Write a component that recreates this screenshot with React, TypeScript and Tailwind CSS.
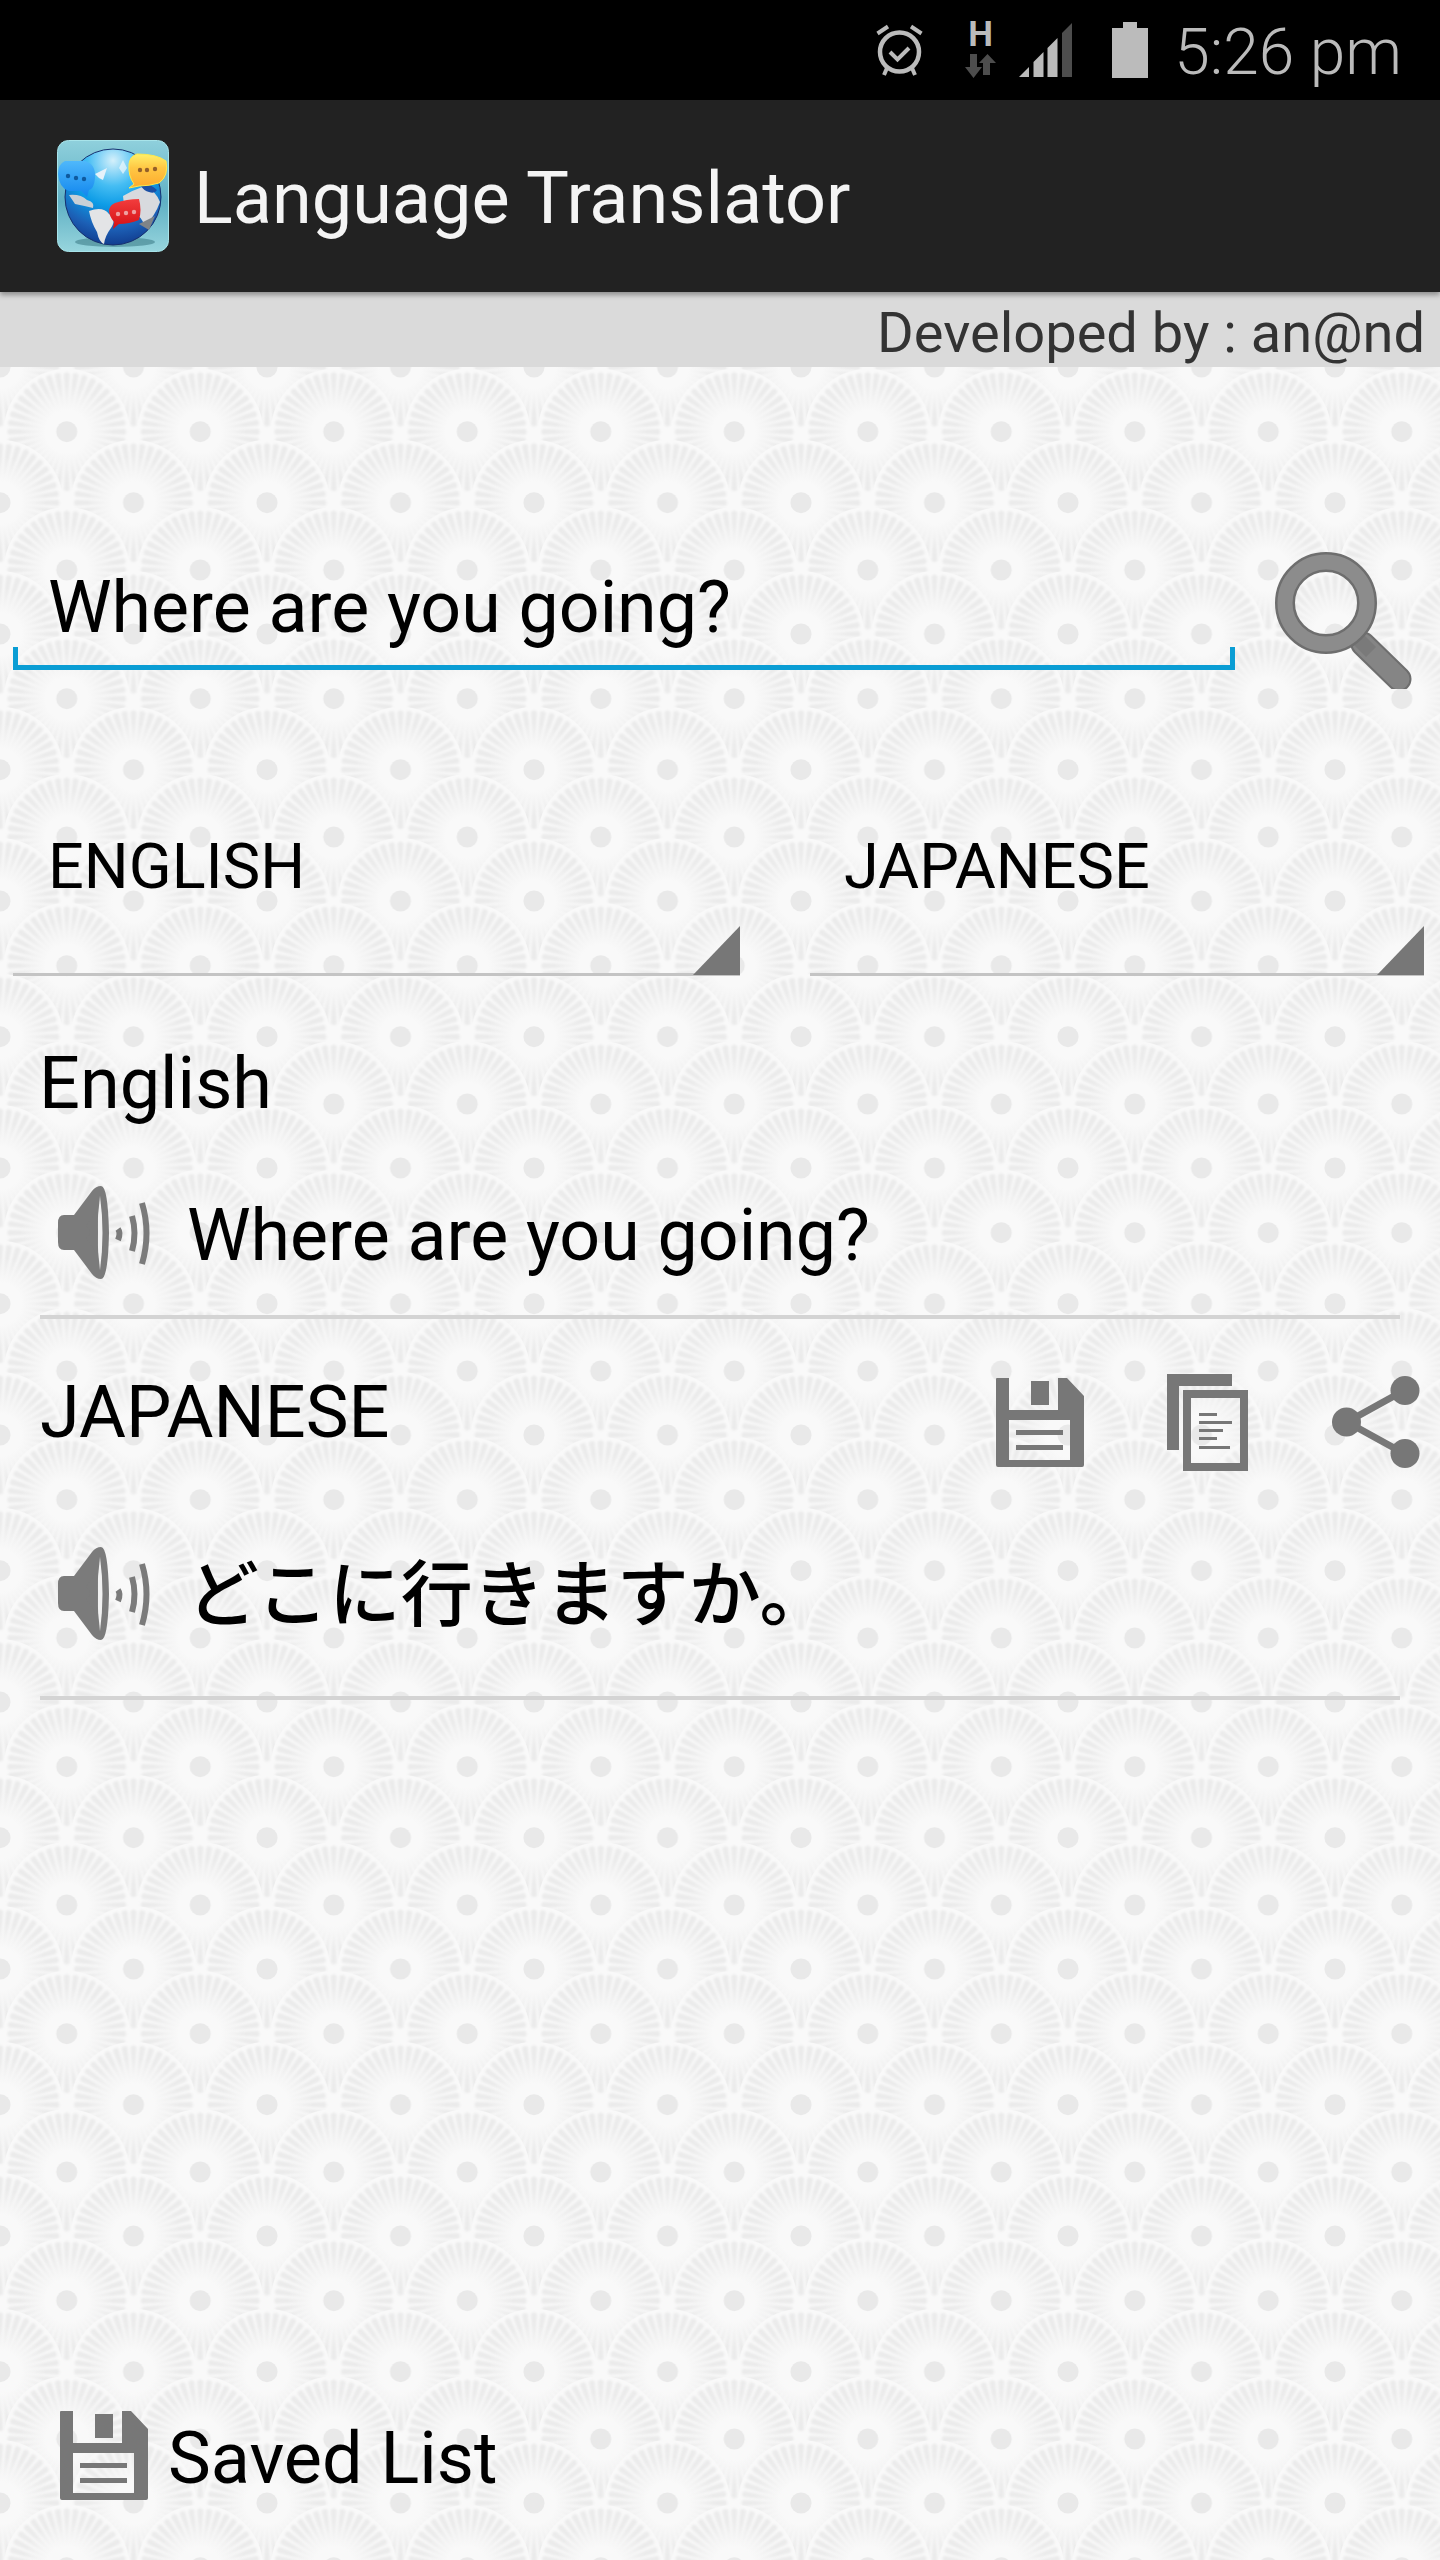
const spokes = Array.from({ length: 40 }, (_, i) => (i * 360) / 40);

function Scale({ id }: { id: string }) {
  return (
    <g id={id}>
      <circle r="63" fill="#f9f9f9" />
      <g filter="url(#soft)">
        {spokes.map((a) => (
          <path key={a} d="M-1.2 -22 L1.2 -22 L3 -58 Q0 -61 -3 -58 Z" fill="#ebebeb" transform={`rotate(${a})`} />
        ))}
      </g>
      <circle r="46" fill="url(#halo)" />
      <circle r="10.5" fill="#e9e9e9" />
    </g>
  );
}

function Pattern() {
  // rows from back to front, the lower scale covers the upper one
  const rows: [number, number][] = [
    [-64, 66.75],
    [0, 0],
    [64.7, 66.75],
    [135.7, 0],
    [203, 66.75],
    [267, 0],
    [331.7, 66.75],
  ];
  return (
    <svg className="absolute inset-0 h-full w-full" aria-hidden="true">
      <defs>
        <filter id="soft" x="-10%" y="-10%" width="120%" height="120%">
          <feGaussianBlur stdDeviation="1" />
        </filter>
        <radialGradient id="halo">
          <stop offset="0.45" stopColor="#f9f9f9" />
          <stop offset="1" stopColor="#f9f9f9" stopOpacity="0" />
        </radialGradient>
        <Scale id="scale" />
        <pattern id="tile" width="133.5" height="267" patternUnits="userSpaceOnUse">
          <rect width="133.5" height="267" fill="#f9f9f9" />
          {rows.map(([y, x]) =>
            [-133.5, 0, 133.5].map((dx) => <use key={`${y}-${dx}`} href="#scale" x={x + dx} y={y} />),
          )}
        </pattern>
      </defs>
      <rect width="100%" height="100%" fill="url(#tile)" />
    </svg>
  );
}

function AlarmIcon() {
  return (
    <svg width="47" height="52" viewBox="0 0 47 52" fill="none" stroke="#bbb">
      <circle cx="23.5" cy="28" r="19.5" strokeWidth="4.5" />
      <path d="M14 28l7.5 7.5L33 24" strokeWidth="4" />
      <path d="M1.5 9.5L12 2.5M45.5 9.5L35 2.5" strokeWidth="4" />
      <path d="M11 44l-3 7M36 44l3 7" strokeWidth="4" />
    </svg>
  );
}

function ArrowsIcon() {
  return (
    <svg width="31" height="24" viewBox="0 0 31 24" fill="#4d4d4d">
      <path d="M5 0h7v13h5L8.5 24 0 13h5z" />
      <path d="M18 21V9h-4l8.5-9L31 9h-6v12z" />
    </svg>
  );
}

function SignalIcon() {
  return (
    <svg width="53" height="54" viewBox="0 0 53 54">
      <path d="M0 54L10 44V54Z" fill="#bbb" />
      <path d="M14.5 54V39L24.5 29V54Z" fill="#bbb" />
      <path d="M28.5 54V25L38.5 15V54Z" fill="#bbb" />
      <path d="M43 54V10L53 0V54Z" fill="#4d4d4d" />
    </svg>
  );
}

function BatteryIcon() {
  return (
    <svg width="36" height="56" viewBox="0 0 36 56" fill="#bbb">
      <path d="M11 0h14v6h11v50H0V6h11z" />
    </svg>
  );
}

function AppIcon() {
  return (
    <svg width="112" height="112" viewBox="0 0 112 112">
      <defs>
        <linearGradient id="bg" x1="0" y1="0" x2="0" y2="1">
          <stop offset="0" stopColor="#8fd0dc" />
          <stop offset="0.55" stopColor="#5fb0c4" />
          <stop offset="1" stopColor="#97d5dd" />
        </linearGradient>
        <radialGradient id="globe" cx="0.5" cy="0.12" r="0.95">
          <stop offset="0" stopColor="#d4f0fb" />
          <stop offset="0.28" stopColor="#45bdf3" />
          <stop offset="0.5" stopColor="#0c9be6" />
          <stop offset="0.75" stopColor="#1c5fb5" />
          <stop offset="1" stopColor="#0d2f80" />
        </radialGradient>
        <linearGradient id="blue" x1="0" y1="0" x2="0" y2="1">
          <stop offset="0" stopColor="#4fb8fb" />
          <stop offset="1" stopColor="#1287ee" />
        </linearGradient>
        <linearGradient id="yellow" x1="0" y1="0" x2="0" y2="1">
          <stop offset="0" stopColor="#fff06a" />
          <stop offset="0.4" stopColor="#ffc845" />
          <stop offset="1" stopColor="#fda92c" />
        </linearGradient>
        <linearGradient id="red" x1="0" y1="0" x2="0" y2="1">
          <stop offset="0" stopColor="#f23d3d" />
          <stop offset="1" stopColor="#d40f14" />
        </linearGradient>
      </defs>
      <rect x="0.5" y="0.5" width="111" height="111" rx="11" fill="url(#bg)" stroke="#a8e4ea" />
      <ellipse cx="58" cy="102" rx="40" ry="5" fill="#3f7f8a" opacity="0.6" />
      <circle cx="56" cy="57" r="48" fill="url(#globe)" stroke="#17306e" strokeWidth="1" />
      <path d="M12 55 Q24 54 30 60 Q38 62 36 68 Q28 66 18 64Z" fill="#c9d0d6" />
      <path d="M32 71 Q46 66 52 74 Q60 79 54 88 Q48 96 47 104 Q42 102 40 92 Q34 82 32 71Z" fill="#e3e4e6" />
      <path d="M66 56 Q76 50 88 46 Q98 50 103 62 Q98 76 88 86 Q84 76 76 72 Q66 68 66 56Z" fill="#d8dade" />
      <path d="M84 46 Q92 42 100 50 Q98 54 92 52 Q87 51 84 46Z" fill="#1a4fa5" />
      <path d="M82 84 L98 76 L92 90 Z" fill="#7f8488" />
      <path d="M38 34 L50 28 L46 40 L42 38Z" fill="#e6f2fa" />
      <path d="M66 20 L70 28 L66 34 L62 28Z" fill="#eef8fc" opacity="0.7" />
      <path d="M8 21 H28 Q39 24 38 38 Q37 49 32 50 L30 57 L24 51 H12 Q2 48 1 34 Q1 24 8 21Z" fill="url(#blue)" />
      <circle cx="11" cy="36" r="2.2" fill="#0f5a9e" />
      <circle cx="19" cy="38" r="2.2" fill="#0f5a9e" />
      <circle cx="27" cy="39" r="2.2" fill="#0f5a9e" />
      <path d="M80 14 Q100 14 109 21 Q112 36 102 43 Q92 46 82 46 L72 48 L77 44 Q71 36 72 24 Q73 16 80 14Z" fill="url(#yellow)" stroke="#ffe94a" strokeWidth="1" />
      <circle cx="83" cy="30" r="2.2" fill="#94602a" />
      <circle cx="90" cy="30" r="2.2" fill="#94602a" />
      <circle cx="98" cy="29" r="2.2" fill="#94602a" />
      <path d="M58 63 Q70 59 82 59 Q85 70 82 80 Q72 84 62 84 L56 89 L57 82 Q52 76 52 70 Q53 65 58 63Z" fill="url(#red)" />
      <circle cx="61" cy="74" r="2.2" fill="#eea0a0" />
      <circle cx="69" cy="73" r="2.2" fill="#eea0a0" />
      <circle cx="77" cy="72" r="2.2" fill="#eea0a0" />
    </svg>
  );
}

function SearchIcon() {
  return (
    <svg width="137" height="137" viewBox="0 0 137 137" fill="none">
      <path d="M88 92 L124 127" stroke="#6e6e6e" strokeWidth="25" strokeLinecap="round" />
      <path d="M88 92 L124 127" stroke="#858585" strokeWidth="21" strokeLinecap="round" />
      <path d="M80 84 L96 100" stroke="#7a7a7a" strokeWidth="14" />
      <circle cx="51" cy="51" r="41" stroke="#6e6e6e" strokeWidth="20" />
      <circle cx="51" cy="51" r="41" stroke="#8c8c8c" strokeWidth="15" />
    </svg>
  );
}

function SpeakerIcon() {
  return (
    <svg width="92" height="94" viewBox="0 0 92 94" fill="none">
      <path d="M6 29 H16 L34 5 Q38 0 43 0 Q50 0 51 47 Q50 93 43 93 Q38 93 34 88 L16 64 H6 Q0 64 0 56 V37 Q0 29 6 29Z" fill="#7b7b7b" />
      <path d="M42 10 Q47 47 42 84 Q37 47 42 10Z" fill="#f1f1f1" />
      <path d="M39 25 Q41 47 39 68 Q32 58 28 52 Q36 47 28 40 Q33 32 39 25Z" fill="#7b7b7b" />
      <path d="M60 43 Q63 47 60 54" stroke="#7b7b7b" strokeWidth="6" />
      <path d="M74 30 Q79 47 74 65" stroke="#7b7b7b" strokeWidth="6" />
      <path d="M84 17 Q93 47 84 78" stroke="#7b7b7b" strokeWidth="6" />
    </svg>
  );
}

function SaveIcon() {
  return (
    <svg width="88" height="89" viewBox="0 0 88 89">
      <path
        fillRule="evenodd"
        fill="#777"
        d="M1 0H13V32H62V0H71L88 18V87Q88 89 86 89H2Q0 89 0 87V1Q0 0 1 0ZM13 42V82H74V42ZM35 3H53V27H35Z"
      />
      <path d="M20 52H67V57H20ZM20 67H67V72H20Z" fill="#777" />
    </svg>
  );
}

function CopyIcon() {
  return (
    <svg width="81" height="97" viewBox="0 0 81 97" fill="#777">
      <path d="M0 0H65V12H12V76H0Z" />
      <path fillRule="evenodd" d="M16 16H81V97H16ZM24 24V89H73V24Z" />
      <path d="M32 39H50V42H32ZM32 47H65V50H32ZM32 55H56V58H32ZM32 63H50V66H32ZM32 72H63V75H32Z" />
    </svg>
  );
}

function ShareIcon() {
  return (
    <svg width="88" height="92" viewBox="0 0 88 92" fill="#777">
      <path d="M15 46L73 14M15 46L73 78" stroke="#777" strokeWidth="7" />
      <circle cx="73" cy="14.5" r="14.5" />
      <circle cx="14.5" cy="46" r="14.5" />
      <circle cx="73" cy="77.5" r="14.5" />
    </svg>
  );
}

function Spinner({ label, className }: { label: string; className: string }) {
  return (
    <div className={`relative flex h-[195px] items-start border-b-[3px] border-[#c4c4c4] ${className}`}>
      <span className="mt-[54px] text-[63px] leading-[63px]">{label}</span>
      <svg className="absolute bottom-[-2px] right-0" width="47" height="49" viewBox="0 0 47 49">
        <path d="M47 0V49H0Z" fill="#777" />
      </svg>
    </div>
  );
}

export default function App() {
  return (
    <div className="flex h-[2560px] w-[1440px] flex-col overflow-hidden bg-[#f9f9f9] font-['Roboto',sans-serif] text-black">
      <div className="flex h-[100px] items-center justify-end bg-black pr-[38px]">
        <AlarmIcon />
        <div className="ml-[42px] flex w-[31px] flex-col items-center">
          <span className="mb-[7px] h-[25px] text-[35px] font-bold leading-[25px] text-[#bbb]">H</span>
          <ArrowsIcon />
        </div>
        <div className="ml-[23px]">
          <SignalIcon />
        </div>
        <div className="ml-[40px]">
          <BatteryIcon />
        </div>
        <span className="ml-[26px] mt-[6px] text-[64px] font-light leading-none text-[#bbb]">5:26 pm</span>
      </div>

      <div className="relative z-10 flex h-[192px] items-center bg-[#222222] pl-[57px] shadow-[0_3px_5px_rgba(0,0,0,0.35)]">
        <AppIcon />
        <h1 className="ml-[25px] mt-[6px] text-[72px] font-normal leading-none text-[#f4f4f4]">Language Translator</h1>
      </div>

      <div className="flex h-[75px] items-center justify-end bg-[#dadada] pr-[15px] pt-[6px] text-[56px] leading-none text-[#333333]">
        Developed by : an@nd
      </div>

      <div className="relative flex flex-1 flex-col">
        <Pattern />
        <div className="relative flex flex-1 flex-col">
          <div className="mt-[143px] flex items-start">
            <div className="relative ml-[13px] h-[160px] w-[1222px] border-b-[5px] border-[#0a9dd4] pl-[35px] pt-[62px] text-[71.7px] leading-[72px]">
              Where are you going?
              <div className="absolute bottom-0 left-0 h-[18px] w-[5px] bg-[#0a9dd4]" />
              <div className="absolute bottom-0 right-0 h-[18px] w-[5px] bg-[#0a9dd4]" />
            </div>
            <div className="ml-[40px] mt-[42px]">
              <SearchIcon />
            </div>
          </div>

          <div className="mt-[92px] flex">
            <Spinner label="ENGLISH" className="ml-[13px] w-[727px] pl-[35px]" />
            <Spinner label="JAPANESE" className="ml-[70px] w-[614px] pl-[34px]" />
          </div>

          <div className="mt-[58px] flex h-[100px] items-center pl-[39px] text-[72px]">English</div>

          <div className="mx-[40px] flex h-[185px] items-center border-b-[4px] border-[#d4d4d4] pl-[18px] pt-[16px]">
            <SpeakerIcon />
            <span className="ml-[37px] mt-[7px] text-[71.7px] leading-none">Where are you going?</span>
          </div>

          <div className="flex h-[186px] items-center pl-[40px] pr-[20px]">
            <span className="mt-[2px] text-[72px] leading-none">JAPANESE</span>
            <div className="ml-auto mt-[20px] flex items-center">
              <SaveIcon />
              <div className="ml-[83px]">
                <CopyIcon />
              </div>
              <div className="ml-[84px]">
                <ShareIcon />
              </div>
            </div>
          </div>

          <div className="mx-[40px] flex h-[195px] items-center border-b-[4px] border-[#d4d4d4] pb-[14px] pl-[18px]">
            <SpeakerIcon />
            <span className="ml-[37px] mt-[4px] font-['Roboto','Noto_Sans_CJK_JP',sans-serif] text-[72px] font-medium leading-none">
              どこに行きますか。
            </span>
          </div>

          <div className="mt-auto mb-[60px] flex items-center pl-[60px]">
            <SaveIcon />
            <span className="ml-[20px] mt-[6px] text-[72px] leading-none">Saved List</span>
          </div>
        </div>
      </div>
    </div>
  );
}
